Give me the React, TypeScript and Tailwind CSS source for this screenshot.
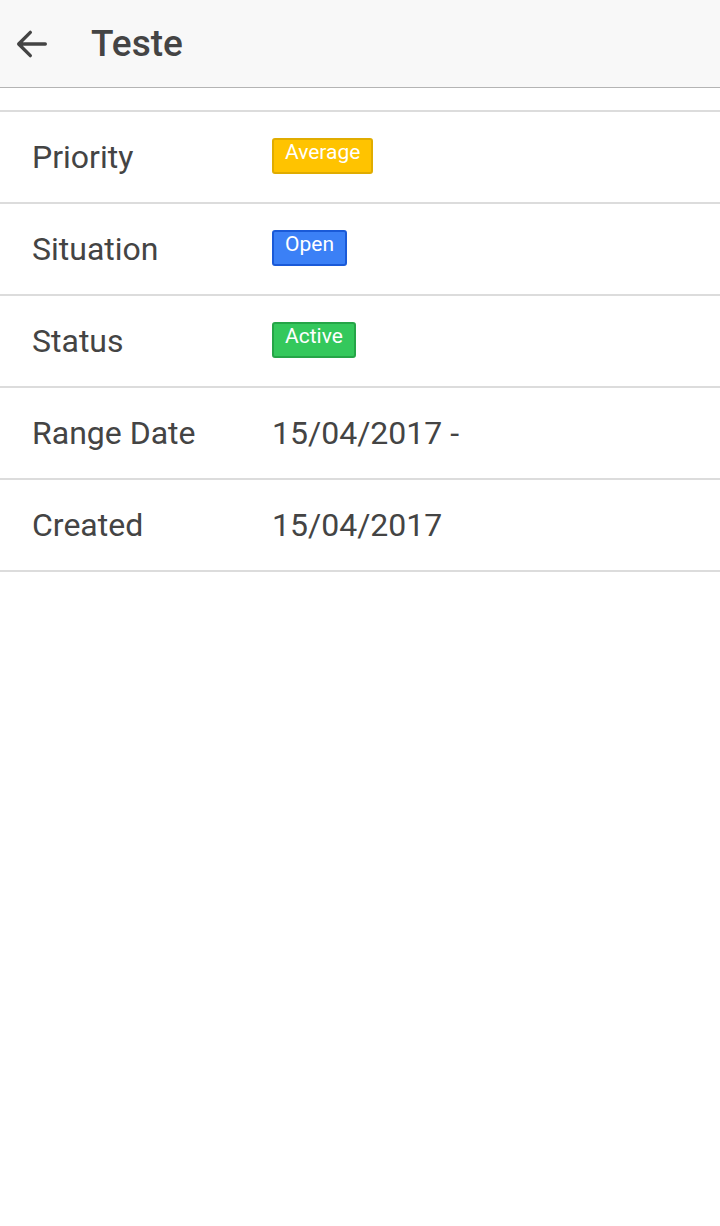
import React from 'react';

type Row = { label: string; value?: string; badge?: { text: string; cls: string } };

const ROWS: Row[] = [
  { label: 'Priority', badge: { text: 'Average', cls: 'bg-[#ffc300] border-[#e0ac00]' } },
  { label: 'Situation', badge: { text: 'Open', cls: 'bg-[#3b80f6] border-[#1a5ad8]' } },
  { label: 'Status', badge: { text: 'Active', cls: 'bg-[#34c85c] border-[#25a547]' } },
  { label: 'Range Date', value: '15/04/2017 -' },
  { label: 'Created', value: '15/04/2017' },
];

export default function App() {
  return (
    <div className="w-[720px] h-[1226px] bg-white text-[#444] font-['Roboto',sans-serif]">
      {/* toolbar */}
      <div className="h-[88px] bg-[#f8f8f8] border-b border-[#b4b4b4] flex items-center">
        <svg className="ml-[12px] w-[40px] h-[40px]" viewBox="0 0 24 24" fill="none">
          <path d="M20 12H4.5M11 5l-7 7 7 7" stroke="#444" strokeWidth="2" strokeLinecap="round" strokeLinejoin="round" />
        </svg>
        <h1 className="ml-[39px] text-[37px] font-medium leading-none -mt-[1px]">Teste</h1>
      </div>

      <div className="mt-[22px] border-t-2 border-[#dcdcdc]">
        {ROWS.map((r) => (
          <div key={r.label} className="h-[92px] border-b-2 border-[#dcdcdc] flex items-center">
            <div className="w-[272px] pl-[32px] text-[32px]">{r.label}</div>
            {r.badge ? (
              <span className={`-mt-[2px] h-[36px] px-[11px] pb-[6px] flex items-center rounded-[3px] border-2 text-white text-[21px] ${r.badge.cls}`}>
                {r.badge.text}
              </span>
            ) : (
              <div className="text-[32px]">{r.value}</div>
            )}
          </div>
        ))}
      </div>
    </div>
  );
}
